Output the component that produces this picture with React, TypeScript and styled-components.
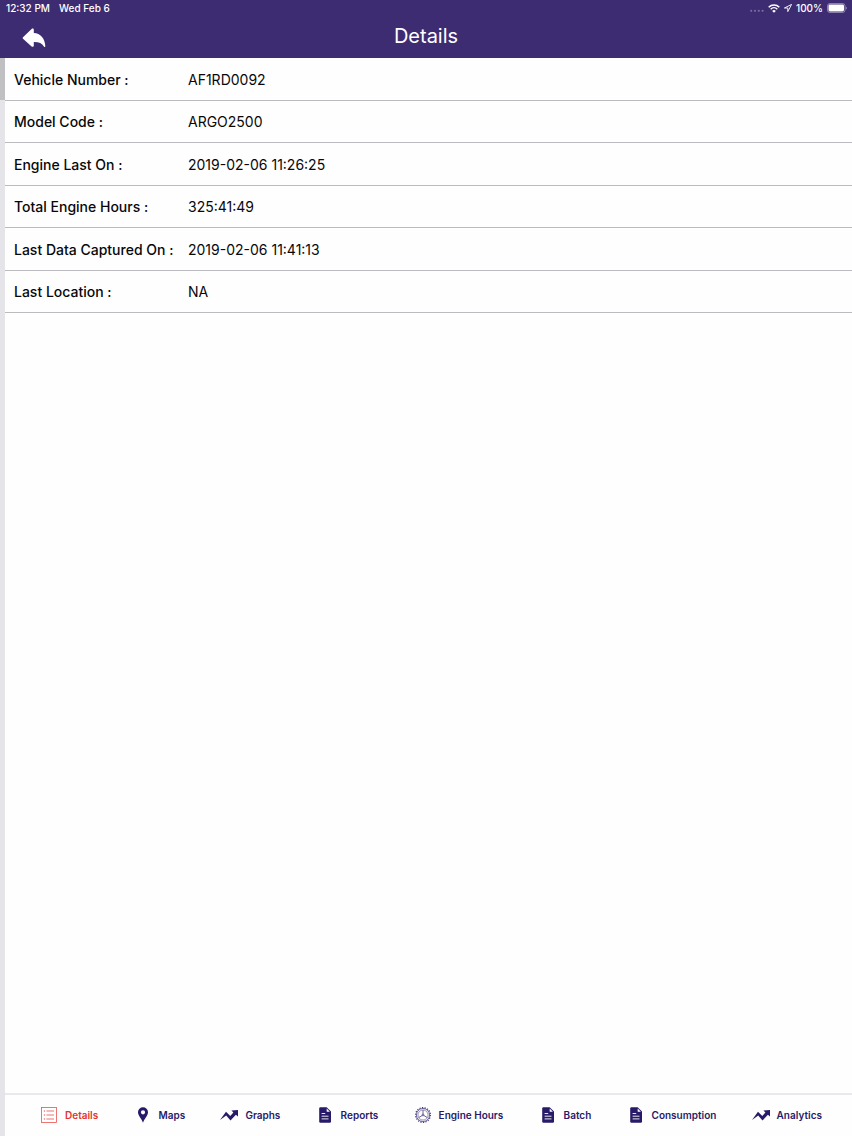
import React from 'react';
import styled, { createGlobalStyle } from 'styled-components';

const GlobalStyle = createGlobalStyle`
  * { box-sizing: border-box; }
  body {
    margin: 0;
    background: #fefefe;
    color: #08080a;
    font-family: Inter, "Liberation Sans", sans-serif;
  }
`;

const Page = styled.div`
  min-height: 100vh;
  display: flex;
  flex-direction: column;
`;

const Header = styled.header`
  height: 58px;
  background: #3e2c73;
  color: #fff;
`;

const StatusBar = styled.div`
  height: 16px;
  padding: 0 5px 0 6px;
  display: flex;
  align-items: center;
  justify-content: space-between;
  font-size: 10px;
  line-height: 16px;
  font-weight: 500;
`;

const StatusGroup = styled.div<{ $gap: number }>`
  display: flex;
  align-items: center;
  gap: ${(p) => p.$gap}px;
`;

const TitleBar = styled.div`
  height: 40px;
  padding: 0 20px;
  display: grid;
  grid-template-columns: 1fr auto 1fr;
  align-items: center;
`;

const Title = styled.h1`
  margin: 0;
  font-size: 20px;
  line-height: 40px;
  font-weight: 400;
`;

const BackButton = styled.button`
  width: 28px;
  height: 28px;
  margin-top: 4px;
  padding: 0;
  border: 0;
  background: none;
  color: inherit;
  display: flex;
  align-items: center;
  justify-content: center;
`;

const Body = styled.div`
  flex: 1;
  display: flex;
`;

const Rail = styled.aside`
  width: 5px;
  background: #e5e4e8;
`;

const RailActive = styled.div`
  height: 42px;
  background: #c0bfc2;
`;

const Content = styled.div`
  flex: 1;
  min-width: 0;
  display: flex;
  flex-direction: column;
`;

const Main = styled.main`
  flex: 1;
`;

const DetailList = styled.dl`
  height: 255px;
  margin: 0;
  display: flex;
  flex-direction: column;
`;

const DetailRow = styled.div`
  flex: 1;
  padding: 2px 0 0 9px;
  display: grid;
  grid-template-columns: 174px 1fr;
  align-items: center;
  border-bottom: 1px solid #bbbabe;
  font-size: 14px;
  line-height: 20px;
`;

const Label = styled.dt`
  font-weight: 500;
  white-space: nowrap;
`;

const Value = styled.dd`
  margin: 0;
`;

const TabBar = styled.nav`
  height: 43px;
  padding: 0 30px 2px 36px;
  display: flex;
  align-items: center;
  justify-content: space-between;
  border-top: 2px solid #eae8ee;
`;

const Tab = styled.a<{ $active?: boolean }>`
  display: flex;
  align-items: center;
  gap: 8px;
  color: ${(p) => (p.$active ? '#e3342f' : '#271a69')};
  font-size: 10px;
  line-height: 16px;
  font-weight: 600;
  text-decoration: none;
  white-space: nowrap;

  svg {
    flex: none;
    overflow: visible;
  }
`;

const WifiIcon = () => (
  <svg width="12" height="9" viewBox="0 0 12 9" fill="none" stroke="currentColor" strokeWidth="1.5" aria-hidden="true">
    <path d="M0.7 3.3a7.5 7.5 0 0 1 10.6 0M2.7 5.2a4.7 4.7 0 0 1 6.6 0" />
    <path d="M6 8.7 4.2 6.9a2.6 2.6 0 0 1 3.6 0z" fill="currentColor" stroke="none" />
  </svg>
);

const LocationIcon = () => (
  <svg width="8" height="8" viewBox="0 0 8 8" fill="none" stroke="currentColor" strokeWidth="0.9" strokeLinejoin="round" aria-hidden="true">
    <path d="M7.6 0.4 0.4 4h3.4v3.6z" />
  </svg>
);

const BatteryIcon = () => (
  <svg width="20" height="10" viewBox="0 0 20 10" aria-hidden="true">
    <rect x="0.5" y="0.5" width="17.5" height="9" rx="2.4" fill="none" stroke="#fff" strokeOpacity="0.4" />
    <rect x="1.5" y="1.5" width="15.5" height="7" rx="1.4" fill="#fff" />
    <path d="M18.8 3.4v3.2q1-.5 1-1.6t-1-1.6z" fill="#fff" fillOpacity="0.5" />
  </svg>
);

const SignalDots = () => (
  <svg width="14" height="8" viewBox="0 0 14 8" fill="#fff" fillOpacity="0.3" aria-hidden="true">
    {[1.2, 5, 8.8, 12.6].map((x) => (
      <circle key={x} cx={x} cy="6.8" r="1.1" />
    ))}
  </svg>
);

const BackIcon = () => (
  <svg width="24" height="20" viewBox="0 0 24 20" fill="currentColor" aria-hidden="true">
    <path d="M1 9.3 9.6 1C10.6.1 11.8.6 11.8 1.9v3c6.6.4 11 5 11.5 13.2.1 1.1-.9 1.4-1.4.4-1.8-3.3-5-4.7-10.1-4.6v3.6c0 1.3-1.2 1.8-2.2.9L1 10.7q-.8-.7 0-1.4z" />
  </svg>
);

const ListIcon = () => (
  <svg width="16" height="16" viewBox="0 0 16 16" fill="none" stroke="currentColor" strokeOpacity="0.85" strokeWidth="0.8" aria-hidden="true">
    <rect x="0.5" y="0.5" width="15" height="15" />
    <path d="M5.4 4H13M5.4 8H13M5.4 12H13" />
    <path d="M2.8 4h1.3M2.8 8h1.3M2.8 12h1.3" strokeWidth="1.2" />
  </svg>
);

const PinIcon = () => (
  <svg width="16" height="16" viewBox="-1 0 16 16" fill="currentColor" fillRule="evenodd" aria-hidden="true">
    <path d="M8 0.3A5 5 0 0 0 3 5.3C3 8.6 6.6 11.6 8 15.7 9.4 11.6 13 8.6 13 5.3A5 5 0 0 0 8 .3zM8 3.2a2.1 2.1 0 1 1 0 4.2 2.1 2.1 0 0 1 0-4.2z" />
  </svg>
);

const TrendIcon = () => (
  <svg width="16" height="16" viewBox="0 0 16 16" fill="currentColor" aria-hidden="true">
    <path d="M-1 13 5 4.8 9.3 9 12.4 5.5 10.4 3.4 17 3V9.6L14.9 7.7 9.5 13.4 5.2 8.6Z" />
  </svg>
);

const DocumentIcon = () => (
  <svg width="16" height="16" viewBox="0 0 16 16" aria-hidden="true">
    <path d="M3.5 0.3h6.2L14 4.5v10q0 1.2-1.2 1.2H3.5q-1.3 0-1.3-1.2v-13Q2.2.3 3.5.3z" fill="currentColor" />
    <path d="M9.7 1.5v3.2h3.2z" fill="#fefefe" />
    <path d="M4.6 6.5h3.6M4.6 9.2h6.9M4.6 11.9h6.9" stroke="#fefefe" strokeWidth="0.9" />
  </svg>
);

const GearIcon = () => (
  <svg width="16" height="16" viewBox="0 0 16 16" fill="none" stroke="currentColor" strokeOpacity="0.85" strokeWidth="0.8" aria-hidden="true">
    <circle cx="8" cy="8" r="7.4" strokeWidth="1.2" strokeDasharray="1.3 1.283" />
    <circle cx="8" cy="8" r="6.5" strokeWidth="0.8" />
    <circle cx="8" cy="8" r="5" strokeWidth="0.5" />
    <circle cx="8" cy="8" r="0.9" />
    <path d="M8 7V3.1M7.1 8.5 3.8 10.5M8.9 8.5l3.3 2" />
  </svg>
);

const details = [
  ['Vehicle Number :', 'AF1RD0092'],
  ['Model Code :', 'ARGO2500'],
  ['Engine Last On :', '2019-02-06 11:26:25'],
  ['Total Engine Hours :', '325:41:49'],
  ['Last Data Captured On :', '2019-02-06 11:41:13'],
  ['Last Location :', 'NA'],
];

const tabs = [
  { label: 'Details', Icon: ListIcon },
  { label: 'Maps', Icon: PinIcon },
  { label: 'Graphs', Icon: TrendIcon },
  { label: 'Reports', Icon: DocumentIcon },
  { label: 'Engine Hours', Icon: GearIcon },
  { label: 'Batch', Icon: DocumentIcon },
  { label: 'Consumption', Icon: DocumentIcon },
  { label: 'Analytics', Icon: TrendIcon },
];

export default function App() {
  return (
    <Page>
      <GlobalStyle />
      <Header>
        <StatusBar>
          <StatusGroup $gap={9}>
            <span>12:32 PM</span>
            <span>Wed Feb 6</span>
          </StatusGroup>
          <StatusGroup $gap={4}>
            <SignalDots />
            <WifiIcon />
            <LocationIcon />
            <span>100%</span>
            <BatteryIcon />
          </StatusGroup>
        </StatusBar>
        <TitleBar>
          <BackButton type="button" aria-label="Back">
            <BackIcon />
          </BackButton>
          <Title>Details</Title>
        </TitleBar>
      </Header>
      <Body>
        <Rail>
          <RailActive />
        </Rail>
        <Content>
          <Main>
            <DetailList>
              {details.map(([label, value]) => (
                <DetailRow key={label}>
                  <Label>{label}</Label>
                  <Value>{value}</Value>
                </DetailRow>
              ))}
            </DetailList>
          </Main>
          <TabBar>
            {tabs.map(({ label, Icon }, i) => (
              <Tab key={label} href="#" $active={i === 0} aria-current={i === 0 ? 'page' : undefined}>
                <Icon />
                {label}
              </Tab>
            ))}
          </TabBar>
        </Content>
      </Body>
    </Page>
  );
}
